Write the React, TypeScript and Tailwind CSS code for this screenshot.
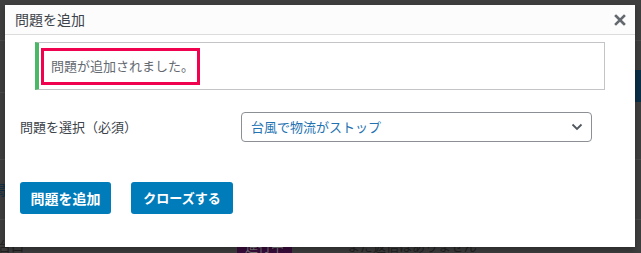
import React from "react";

const font = { fontFamily: '"Noto Sans CJK JP", "Noto Sans", sans-serif' };

export default function App() {
  return (
    <div className="relative w-[641px] h-[253px] overflow-hidden bg-[#3e3e3e]" style={font}>
      {/* background page (dimmed) */}
      <div className="flex flex-col w-full h-full">
        <div className="h-[41px] border-b border-[#4a4a4a]" />
        <div className="h-[52px] border-b border-[#4a4a4a] flex justify-end items-end">
          <div className="w-[8px] h-[32px] bg-[#0b2f47] mb-[-10px]" />
        </div>
        <div className="h-[67px] border-b border-[#4a4a4a]" />
        <div className="h-[60px] border-b border-[#4a4a4a] flex items-center">
          <span className="text-[14px] text-[#0b2f47] ml-[-8px]">掲</span>
        </div>
        <div className="flex-1 flex items-end text-[13px] leading-[14px] text-[#222]">
          <span className="ml-[-2px]">台口</span>
          <span className="ml-[213px] px-[8px] bg-[#3a0c3c] text-[#777]">進行中</span>
          <span className="ml-[55px]">まだ返信はありません</span>
        </div>
      </div>

      {/* modal */}
      <div className="absolute left-[5px] top-[5px] w-[630px] h-[242px] bg-white flex flex-col shadow-[0_3px_6px_rgba(0,0,0,0.3)]">
        <div className="h-[30px] bg-[#fcfcfc] border-b border-[#dcdcde] flex items-center justify-between pl-[10px] pr-[9px]">
          <span className="text-[14px] text-[#3c434a]">問題を追加</span>
          <svg width="12" height="12" viewBox="0 0 12 12" className="mt-[1px]">
            <path d="M2 2 L10 10 M10 2 L2 10" stroke="#646970" strokeWidth="2.6" strokeLinecap="square" />
          </svg>
        </div>
        <div className="flex flex-col px-[15px]">
          <div className="mt-[7px] mx-[15px] h-[48px] border border-[#c3c4c7] border-l-4 border-l-[#4ab866] flex items-center pl-[2px]">
            <div className="h-[37px] border-[3px] border-[#f0024f] flex items-center pl-[7px] pr-[3px]">
              <span className="text-[13px] text-[#646970]">問題が追加されました。</span>
            </div>
          </div>
          <div className="mt-[22px] flex items-center">
            <span className="w-[221px] text-[13px] text-[#3c434a]">問題を選択（必須）</span>
            <div className="w-[351px] h-[30px] border border-[#8c8f94] rounded-[4px] flex items-center justify-between pl-[9px] pr-[8px]">
              <span className="text-[13px] text-[#2271b1]">台風で物流がストップ</span>
              <svg width="12" height="8" viewBox="0 0 12 8">
                <path d="M1.5 1.5 L6 6 L10.5 1.5" stroke="#50575e" strokeWidth="1.8" fill="none" />
              </svg>
            </div>
          </div>
          <div className="mt-[40px] flex gap-[20px]">
            <button className="w-[91px] h-[32px] bg-[#007cba] rounded-[3px] text-white text-[14px] font-semibold flex items-center justify-center">
              問題を追加
            </button>
            <button className="w-[102px] h-[32px] bg-[#007cba] rounded-[3px] text-white text-[13px] font-semibold flex items-center justify-center">
              クローズする
            </button>
          </div>
        </div>
      </div>
    </div>
  );
}
